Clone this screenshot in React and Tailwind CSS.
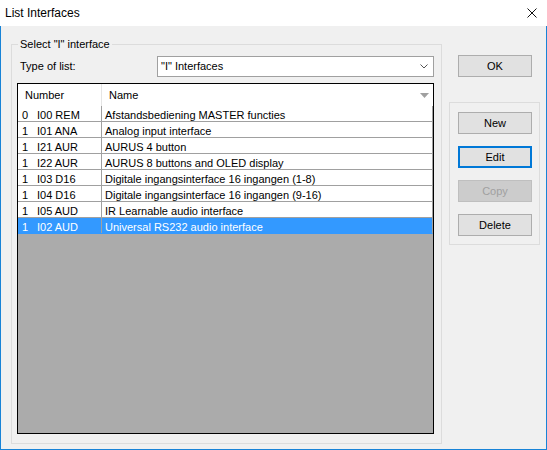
import React from "react";

const rows = [
	{ num: "0", code: "I00 REM", name: "Afstandsbediening MASTER functies" },
	{ num: "1", code: "I01 ANA", name: "Analog input interface" },
	{ num: "1", code: "I21 AUR", name: "AURUS 4 button" },
	{ num: "1", code: "I22 AUR", name: "AURUS 8 buttons and OLED display" },
	{ num: "1", code: "I03 D16", name: "Digitale ingangsinterface 16 ingangen (1-8)" },
	{ num: "1", code: "I04 D16", name: "Digitale ingangsinterface 16 ingangen (9-16)" },
	{ num: "1", code: "I05 AUD", name: "IR Learnable audio interface" },
	{ num: "1", code: "I02 AUD", name: "Universal RS232 audio interface", selected: true },
];

function WinButton({ label, focused, disabled }) {
	let look = "bg-[#e1e1e1] border border-[#adadad] text-black";
	if (focused) look = "bg-[#e1e1e1] border-2 border-[#0078d7] text-black";
	if (disabled) look = "bg-[#cccccc] border border-[#bfbfbf] text-[#a0a0a0]";

	return (
		<div className={`w-[74px] h-[22px] flex items-center justify-center text-[11px] ${look}`}>
			{label}
		</div>
	);
}

function App() {
	return (
		<div className="w-[547px] h-[450px] flex flex-col bg-[#f0f0f0] font-['Liberation_Sans',Arial,sans-serif] text-[11px] text-black select-none">
			{/* title bar */}
			<div className="h-[26px] shrink-0 bg-white flex items-center pl-[5px] pr-[10px]">
				<span className="text-[12px] leading-[16px]">List Interfaces</span>
				<svg className="ml-auto w-[10px] h-[10px]" viewBox="0 0 10 10" fill="none" stroke="#111" strokeWidth="1">
					<path d="M0.5 0.5 L9.5 9.5 M9.5 0.5 L0.5 9.5" />
				</svg>
			</div>

			<div className="flex-1 flex items-start pl-[10px] border-x border-b border-[#1883d7]">
				{/* select group */}
				<div className="relative mt-[18px] w-[431px] h-[400px] border border-[#dcdcdc] pt-[11px] pl-[5px] pr-[7px]">
					<span className="absolute left-[6px] -top-[8px] px-[2px] bg-[#f0f0f0] leading-[15px]">
						Select "I" interface
					</span>

					<div className="flex items-center h-[21px]">
						<div className="w-[140px] pl-[3px]">Type of list:</div>
						<div className="w-[277px] h-[21px] bg-white border border-[#a0a0a0] flex items-center pl-[3px] pr-[5px]">
							<span>"I" Interfaces</span>
							<svg className="ml-auto w-[8px] h-[5px]" viewBox="0 0 8 5" fill="none" stroke="#555" strokeWidth="1">
								<path d="M0.5 0.5 L4 4 L7.5 0.5" />
							</svg>
						</div>
					</div>

					{/* list */}
					<div className="mt-[6px] h-[351px] border border-black bg-[#ababab] flex flex-col overflow-hidden">
						<div className="h-[22px] shrink-0 bg-white flex">
							<div className="w-[84px] border-r border-[#e5e5e5] flex items-center pl-[7px]">Number</div>
							<div className="flex-1 flex items-center pl-[7px] pr-[4px]">
								<span>Name</span>
								<svg className="ml-auto w-[9px] h-[5px]" viewBox="0 0 9 5">
									<path d="M0 0 L9 0 L4.5 5 Z" fill="#a0a0a0" />
								</svg>
							</div>
						</div>

						{rows.map((row) => (
							<div
								key={row.code}
								className={`h-[16px] shrink-0 flex overflow-hidden border-r border-b border-r-[#a0a0a0] leading-[15px] ${
									row.selected ? "bg-[#3399ff] text-white border-b-[#3399ff]" : "bg-white border-b-[#a0a0a0]"
								}`}
							>
								<div className="w-[84px] border-r border-[#a0a0a0] flex pl-[4px] pt-[2px]">
									<span className="w-[15px]">{row.num}</span>
									<span>{row.code}</span>
								</div>
								<div className="flex-1 pl-[3px] pt-[2px] whitespace-nowrap">{row.name}</div>
							</div>
						))}
					</div>
				</div>

				{/* buttons */}
				<div className="ml-[7px] flex flex-col">
					<div className="ml-[9px] mt-[29px]">
						<WinButton label="OK" />
					</div>
					<div className="mt-[25px] w-[91px] h-[143px] border border-[#dcdcdc] pt-[9px] pl-[8px] flex flex-col gap-[12px]">
						<WinButton label="New" />
						<WinButton label="Edit" focused />
						<WinButton label="Copy" disabled />
						<WinButton label="Delete" />
					</div>
				</div>
			</div>
		</div>
	);
}

export default App;
